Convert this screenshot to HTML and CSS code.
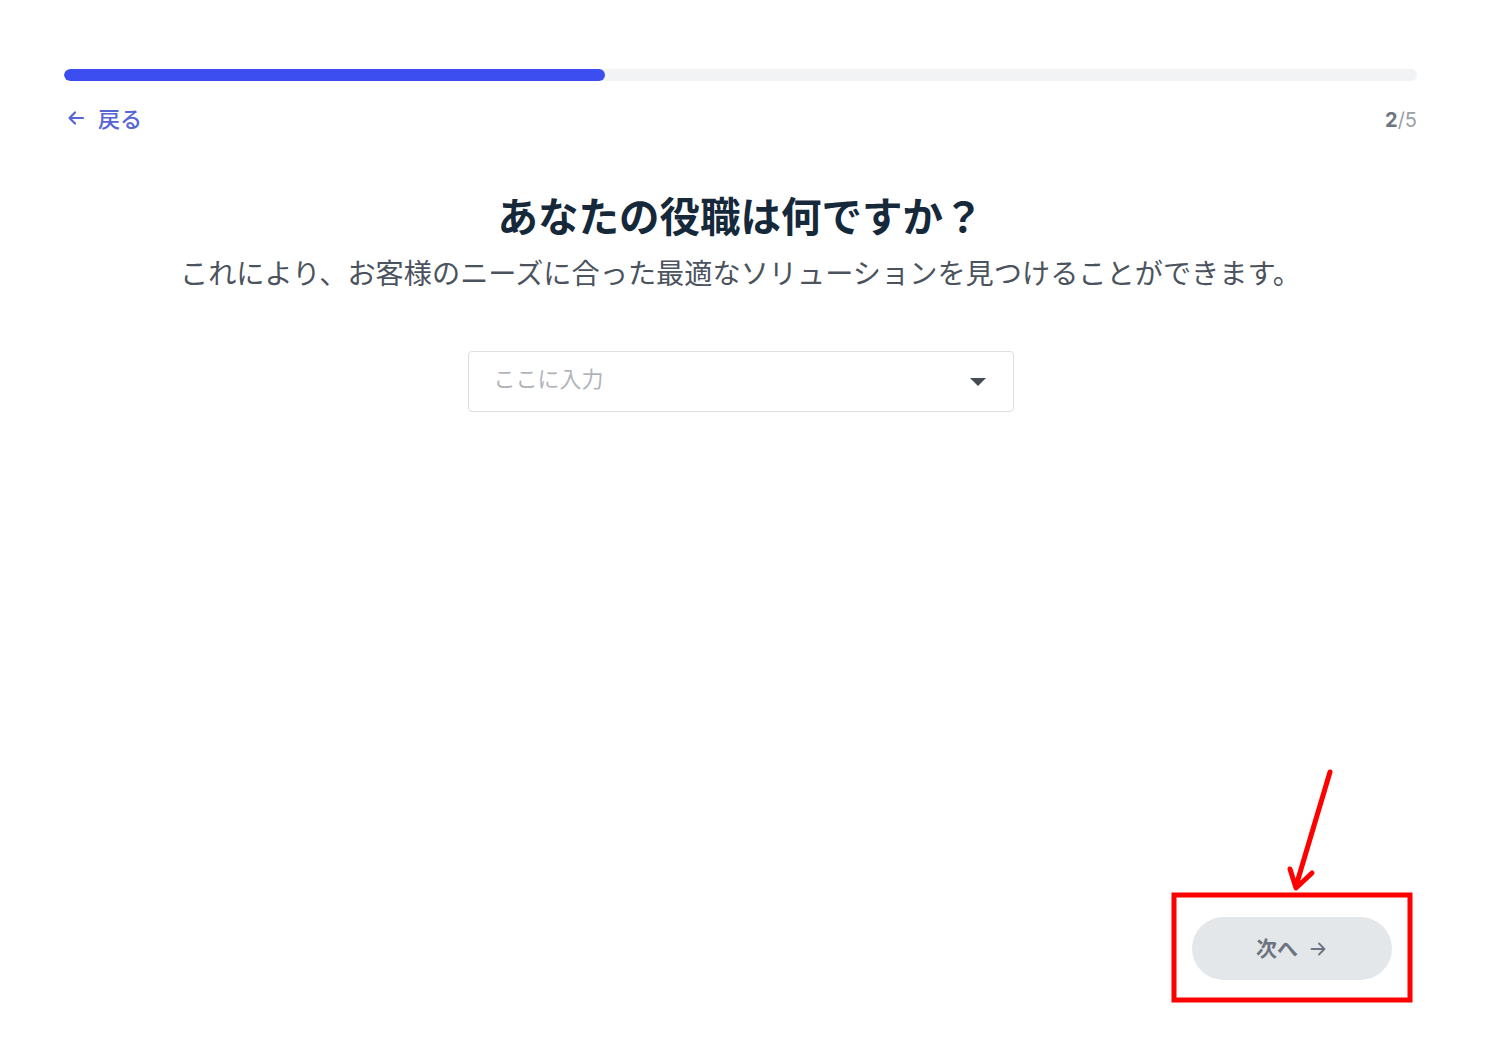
FILE: index.html
```html
<!DOCTYPE html>
<html lang="ja">
<head>
<meta charset="utf-8">
<title>役職</title>
<link rel="stylesheet" href="styles.css">
</head>
<body>
<div class="page">
  <div class="progress"><div class="progress-fill" style="width:40%"></div></div>
  <div class="nav">
    <a class="back" href="#">
      <svg class="back-icon" viewBox="0 0 20 20" width="20" height="20"><path d="M17 10H3.5M9 4.5L3.5 10L9 15.5" fill="none" stroke="currentColor" stroke-width="2.2" stroke-linecap="round" stroke-linejoin="round"/></svg>
      <span>戻る</span>
    </a>
    <div class="step"><b>2</b>/5</div>
  </div>
  <h1 class="title">あなたの役職は何ですか？</h1>
  <p class="subtitle">これにより、お客様のニーズに合った最適なソリューションを見つけることができます。</p>
  <div class="select">
    <span class="placeholder">ここに入力</span>
    <span class="caret"></span>
  </div>
  <div class="footer">
    <button class="next"><span class="next-label">次へ</span> <svg class="next-icon" viewBox="0 0 20 20" width="20" height="20"><path d="M3.5 10h13M11 4.5l5.5 5.5-5.5 5.5" fill="none" stroke="currentColor" stroke-width="1.8" stroke-linecap="round" stroke-linejoin="round"/></svg></button>
  </div>
</div>
<svg class="annotation" viewBox="0 0 1488 1049" width="1488" height="1049">
  <rect x="1174" y="895" width="236" height="105" fill="none" stroke="#ff0000" stroke-width="5"/>
  <path d="M1330 772L1296 886M1290 869L1296 888L1312 873" fill="none" stroke="#ff0000" stroke-width="5" stroke-linecap="round" stroke-linejoin="round"/>
</svg>
</body>
</html>
```

FILE: styles.css
```css
html, body {
  margin: 0;
  padding: 0;
  background: #ffffff;
}
body {
  font-family: Inter, "Noto Sans CJK JP", sans-serif;
  position: relative;
}
.page {
  box-sizing: border-box;
  height: 1049px;
  padding: 69px 71px 69px 64px;
  display: flex;
  flex-direction: column;
}
.progress {
  height: 12px;
  border-radius: 6px;
  background: #f2f3f5;
  overflow: hidden;
}
.progress-fill {
  height: 100%;
  border-radius: 6px;
  background: #3d4ef0;
}
.nav {
  margin-top: 23px;
  display: flex;
  justify-content: space-between;
  align-items: center;
  height: 28px;
}
.back {
  display: flex;
  align-items: center;
  gap: 12px;
  color: #5565d4;
  text-decoration: none;
  font-size: 22px;
  font-weight: 500;
  padding-left: 2px;
}
.back span {
  margin-top: -2px;
}
.back-icon {
  display: block;
}
.step {
  font-size: 20px;
  color: #9aa0a8;
  padding-top: 4px;
}
.step b {
  color: #70767f;
  font-weight: 700;
}
.title {
  margin: 58px 0 0;
  text-align: center;
  font-size: 40.5px;
  line-height: 56px;
  font-weight: 600;
  color: #16293b;
}
.subtitle {
  margin: 8px 0 0;
  text-align: center;
  font-size: 28.2px;
  line-height: 40px;
  color: #4b535e;
}
.select {
  box-sizing: border-box;
  margin: 57px auto 0;
  width: 546px;
  height: 61px;
  border: 1.5px solid #dcdfe3;
  border-radius: 4px;
  display: flex;
  align-items: center;
  justify-content: space-between;
  padding: 0 27px 0 25px;
}
.placeholder {
  font-size: 22px;
  line-height: 30px;
  color: #b1b5bb;
  margin-bottom: 6px;
}
.caret {
  width: 0;
  height: 0;
  border-left: 8px solid transparent;
  border-right: 8px solid transparent;
  border-top: 8px solid #454b53;
  margin-top: 1px;
}
.footer {
  margin-top: auto;
  display: flex;
  justify-content: flex-end;
  padding-right: 25px;
}
.next {
  width: 200px;
  height: 63px;
  border: none;
  border-radius: 32px;
  background: #e4e7ea;
  color: #6b7480;
  font-family: Inter, "Noto Sans CJK JP", sans-serif;
  font-size: 21px;
  font-weight: 700;
  display: flex;
  align-items: center;
  justify-content: center;
  gap: 10px;
  padding: 0;
}
.next-label {
  margin-top: -4px;
}
.next-icon {
  display: block;
}
.annotation {
  position: absolute;
  left: 0;
  top: 0;
  pointer-events: none;
}
```
